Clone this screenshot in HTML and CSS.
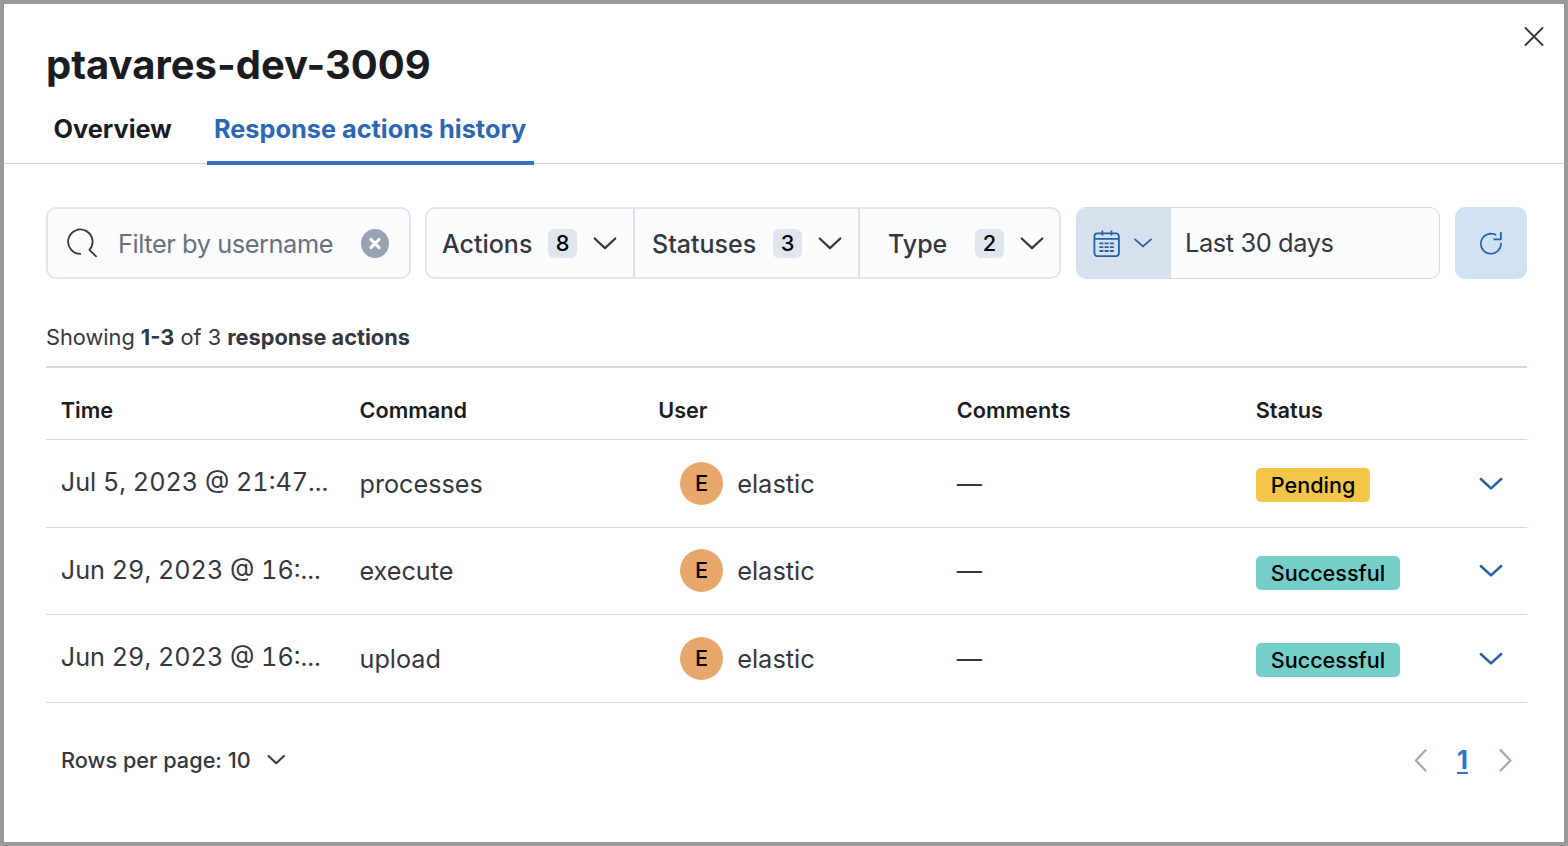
FILE: index.html
```html
<!DOCTYPE html>
<html lang="en">
<head>
<meta charset="utf-8">
<title>ptavares-dev-3009</title>
<link rel="stylesheet" href="styles.css">
</head>
<body>
<main class="flyout">
  <button class="close" aria-label="Close"><svg width="20" height="20" viewBox="0 0 20 20"><path d="M1.5 1l17 17M18.5 1l-17 17"/></svg></button>
  <header class="flyout-header">
    <h1 class="title">ptavares-dev-3009</h1>
    <nav class="tabs">
      <a class="tab"><span>Overview</span></a>
      <a class="tab tab-active"><span>Response actions history</span></a>
    </nav>
  </header>
  <section class="flyout-body">
    <div class="filters">
      <div class="search">
        <svg class="search-icon" width="32" height="32" viewBox="0 0 32 32"><path d="M14 26.9A12.2 12.2 0 1 1 22.4 22.9L29.6 29.9"/></svg>
        <span class="placeholder">Filter by username</span>
        <svg class="clear" width="28" height="29" viewBox="0 0 28 29"><ellipse cx="14" cy="14.5" rx="14" ry="14.5"/><path d="M9.9 10.4l8.2 8.2M18.1 10.4l-8.2 8.2"/></svg>
      </div>
      <div class="filter-group">
        <button class="filter filter-actions"><span class="filter-label">Actions</span><span class="count">8</span><svg class="chevron" width="24" height="14" viewBox="0 0 24 14"><path d="M1.7 2.5L12 12.1 22.3 2.5"/></svg></button>
        <button class="filter filter-statuses"><span class="filter-label">Statuses</span><span class="count">3</span><svg class="chevron" width="24" height="14" viewBox="0 0 24 14"><path d="M1.7 2.5L12 12.1 22.3 2.5"/></svg></button>
        <button class="filter filter-type"><span class="filter-label">Type</span><span class="count">2</span><svg class="chevron" width="24" height="14" viewBox="0 0 24 14"><path d="M1.7 2.5L12 12.1 22.3 2.5"/></svg></button>
      </div>
      <div class="date-picker">
        <div class="quick-select">
          <svg width="27" height="27" viewBox="0 0 27 27"><rect x="1.4" y="3.4" width="24.5" height="22.8" rx="3.2"/><path d="M1.4 8.8h24.5M9.4 .4v5.2M18.4 .4v5.2"/><path class="dates" d="M6.4 13.4h14.5M6.4 17.2h14.5M6.4 21h14.5"/></svg>
          <svg class="small-chevron" width="18" height="10" viewBox="0 0 18 10"><path d="M1 1.4l8 7 8-7"/></svg>
        </div>
        <span class="range">Last 30 days</span>
      </div>
      <button class="refresh" aria-label="Refresh"><svg width="24" height="24" viewBox="0 0 26 26"><path d="M23.8 12.8A10.9 10.9 0 1 1 18.6 4.4M23.7 1v8h-8"/></svg></button>
    </div>
    <p class="summary">Showing <b>1-3</b> of 3 <b>response actions</b></p>
    <div class="table">
      <div class="row head"><span>Time</span><span>Command</span><span>User</span><span>Comments</span><span>Status</span><span></span></div>
      <div class="row">
        <span class="time">Jul 5, 2023 @ 21:47...</span><span>processes</span>
        <span class="user"><i class="avatar">E</i>elastic</span><span>—</span>
        <span><em class="badge pending">Pending</em></span>
        <svg class="expand" width="24" height="14" viewBox="0 0 24 14"><path d="M1.8 2L12 11.4 22.2 2"/></svg>
      </div>
      <div class="row">
        <span class="time">Jun 29, 2023 @ 16:...</span><span>execute</span>
        <span class="user"><i class="avatar">E</i>elastic</span><span>—</span>
        <span><em class="badge success">Successful</em></span>
        <svg class="expand" width="24" height="14" viewBox="0 0 24 14"><path d="M1.8 2L12 11.4 22.2 2"/></svg>
      </div>
      <div class="row">
        <span class="time">Jun 29, 2023 @ 16:...</span><span>upload</span>
        <span class="user"><i class="avatar">E</i>elastic</span><span>—</span>
        <span><em class="badge success">Successful</em></span>
        <svg class="expand" width="24" height="14" viewBox="0 0 24 14"><path d="M1.8 2L12 11.4 22.2 2"/></svg>
      </div>
    </div>
    <footer class="pager">
      <span class="page-size">Rows per page: 10</span>
      <svg class="size-chevron" width="18" height="11" viewBox="0 0 18 11"><path d="M1.5 2l7.7 7.3 7.7-7.3"/></svg>
      <div class="pages">
        <svg width="14" height="24" viewBox="0 0 14 24"><path d="M11.5 2.3L1.9 12.5 11.5 22.5"/></svg>
        <a class="page">1</a>
        <svg width="14" height="24" viewBox="0 0 14 24"><path d="M2.7 2.3L12.5 12.5 2.7 22.5"/></svg>
      </div>
    </footer>
  </section>
</main>
</body>
</html>
```
FILE: styles.css
```css
* { box-sizing: border-box; }
body { margin: 0; font-family: Inter, sans-serif; color: #343741; }
button { border: 0; margin: 0; padding: 0; font: inherit; color: inherit; background: none; }
svg { display: block; flex: none; fill: none; stroke: #343741; stroke-width: 2; stroke-linecap: round; stroke-linejoin: round; }
.flyout { position: relative; width: 1568px; height: 846px; border: 4px solid #999; background: #fff; overflow: hidden; }
.close { position: absolute; top: 23px; right: 20px; }
.close svg { stroke-width: 1.8; }
.flyout-header { height: 160px; padding: 35px 42px 0; border-bottom: 1px solid #d3dae6; }
.title { margin: 0; font-size: 40px; line-height: 52px; font-weight: 700; color: #1a1c21; white-space: nowrap; }
.tabs { display: flex; gap: 29px; height: 74px; }
.tab { width: 132px; height: 74px; padding: 20px 0 0 7.5px; font-size: 25.3px; line-height: 36px; font-weight: 700; color: #1a1c21; white-space: nowrap; }
.tab-active { width: 327px; padding-left: 7px; color: #2b67b5; border-bottom: 4px solid #2f72c6; }
.flyout-body { padding: 43px 37px 0 42px; }
.filters { display: flex; height: 72px; }
.search { width: 365px; display: flex; align-items: center; padding: 0 20px 0 19px; background: #fbfcfd; border: 2px solid #e2e5f0; border-radius: 10px; }
.search-icon { stroke-width: 1.8; stroke-linecap: butt; }
.placeholder { width: 241px; margin-left: 19px; font-size: 25.4px; letter-spacing: -0.45px; color: #69707d; white-space: nowrap; }
.clear { margin-left: 2px; stroke: #fff; stroke-width: 3; }
.clear ellipse { fill: #98a2b3; stroke: none; }
.filter-group { width: 636px; margin-left: 14px; display: flex; background: #fbfcfd; border: 2px solid #e2e5f0; border-radius: 10px; }
.filter { display: flex; align-items: center; font-size: 25px; font-weight: 500; text-align: left; border-right: 2px solid #dde1ec; }
.filter-actions { width: 208px; padding-left: 15px; }
.filter-statuses { width: 225px; padding-left: 17px; }
.filter-type { width: 199px; padding-left: 28px; border-right: 0; }
.filter-label { width: 106px; padding-top: 2px; }
.filter-statuses .filter-label { width: 121px; }
.filter-type .filter-label { width: 87px; }
.count { width: 29px; height: 29px; border-radius: 6px; background: #e0e5ee; color: #000; font-size: 21.8px; line-height: 29px; text-align: center; }
.chevron { margin-left: 16px; stroke-width: 2.2; }
.date-picker { width: 364px; margin-left: 15px; display: flex; background: #fbfcfd; border: 1px solid #d3d9e8; border-radius: 10px; overflow: hidden; }
.quick-select { width: 94px; display: flex; align-items: center; padding-left: 16px; background: #d7e1ed; }
.quick-select svg, .refresh svg { stroke: #2360a6; stroke-width: 1.8; stroke-linecap: butt; }
.quick-select .dates { stroke-dasharray: 4 1.2; }
.quick-select .small-chevron { margin-left: 13.5px; stroke-linecap: round; }
.range { padding-left: 14px; font-size: 25.4px; line-height: 70px; letter-spacing: -0.4px; }
.refresh { width: 72px; margin-left: 15px; display: flex; align-items: center; justify-content: center; background: #d0e2f2; border-radius: 10px; }
.summary { margin: 43px 0 0; font-size: 21.75px; line-height: 30px; white-space: nowrap; }
.table { margin-top: 14px; border-top: 2px solid #d3dae6; }
.row { display: grid; grid-template-columns: 298.7px 298.7px 298.7px 298.9px 222.8px 24px; height: 87.6px; padding-left: 14.8px; align-items: center; font-size: 25.2px; border-bottom: 1px solid #d3dae6; white-space: nowrap; }
.row > span:nth-child(2), .row > span:nth-child(4) { padding-top: 1px; }
.head { height: 72px; padding-top: 27px; font-size: 21.7px; line-height: 30px; align-items: start; font-weight: 600; color: #1a1c21; }
.head > span:nth-child(n) { padding-top: 0; }
.time { padding-bottom: 2px; font-size: 25.2px; font-feature-settings: "calt" 1, "kern" 1, "liga" 1, "tnum" 1; }
.user { display: flex; align-items: center; padding-left: 22px; font-size: 25.4px; }
.avatar { width: 43px; height: 43px; margin-right: 14px; border-radius: 50%; background: #e8a76b; color: #000; font-size: 21.8px; line-height: 43px; font-weight: 500; font-style: normal; text-align: center; }
.badge { display: block; width: max-content; height: 34px; margin-top: 3.4px; padding: 0 15px; border-radius: 5px; color: #000; font-size: 21.6px; line-height: 34px; font-weight: 500; font-style: normal; }
.pending { background: #f3c648; }
.success { background: #75cec8; }
.expand { margin-top: 1px; stroke: #2360a6; stroke-width: 2.5; }
.pager { display: flex; align-items: center; height: 60px; margin-top: 27px; padding: 0 15px; }
.page-size { width: 190px; font-size: 21.7px; font-weight: 500; white-space: nowrap; }
.size-chevron { margin-left: 16px; }
.pages { display: flex; align-items: center; gap: 29px; margin-left: auto; }
.pages svg { stroke: #a2aabb; stroke-width: 2.4; }
.page { width: 12px; font-size: 25.4px; line-height: 36px; font-weight: 700; color: #2f72c6; text-decoration: underline; text-decoration-thickness: 2px; text-underline-offset: 3px; }
```
